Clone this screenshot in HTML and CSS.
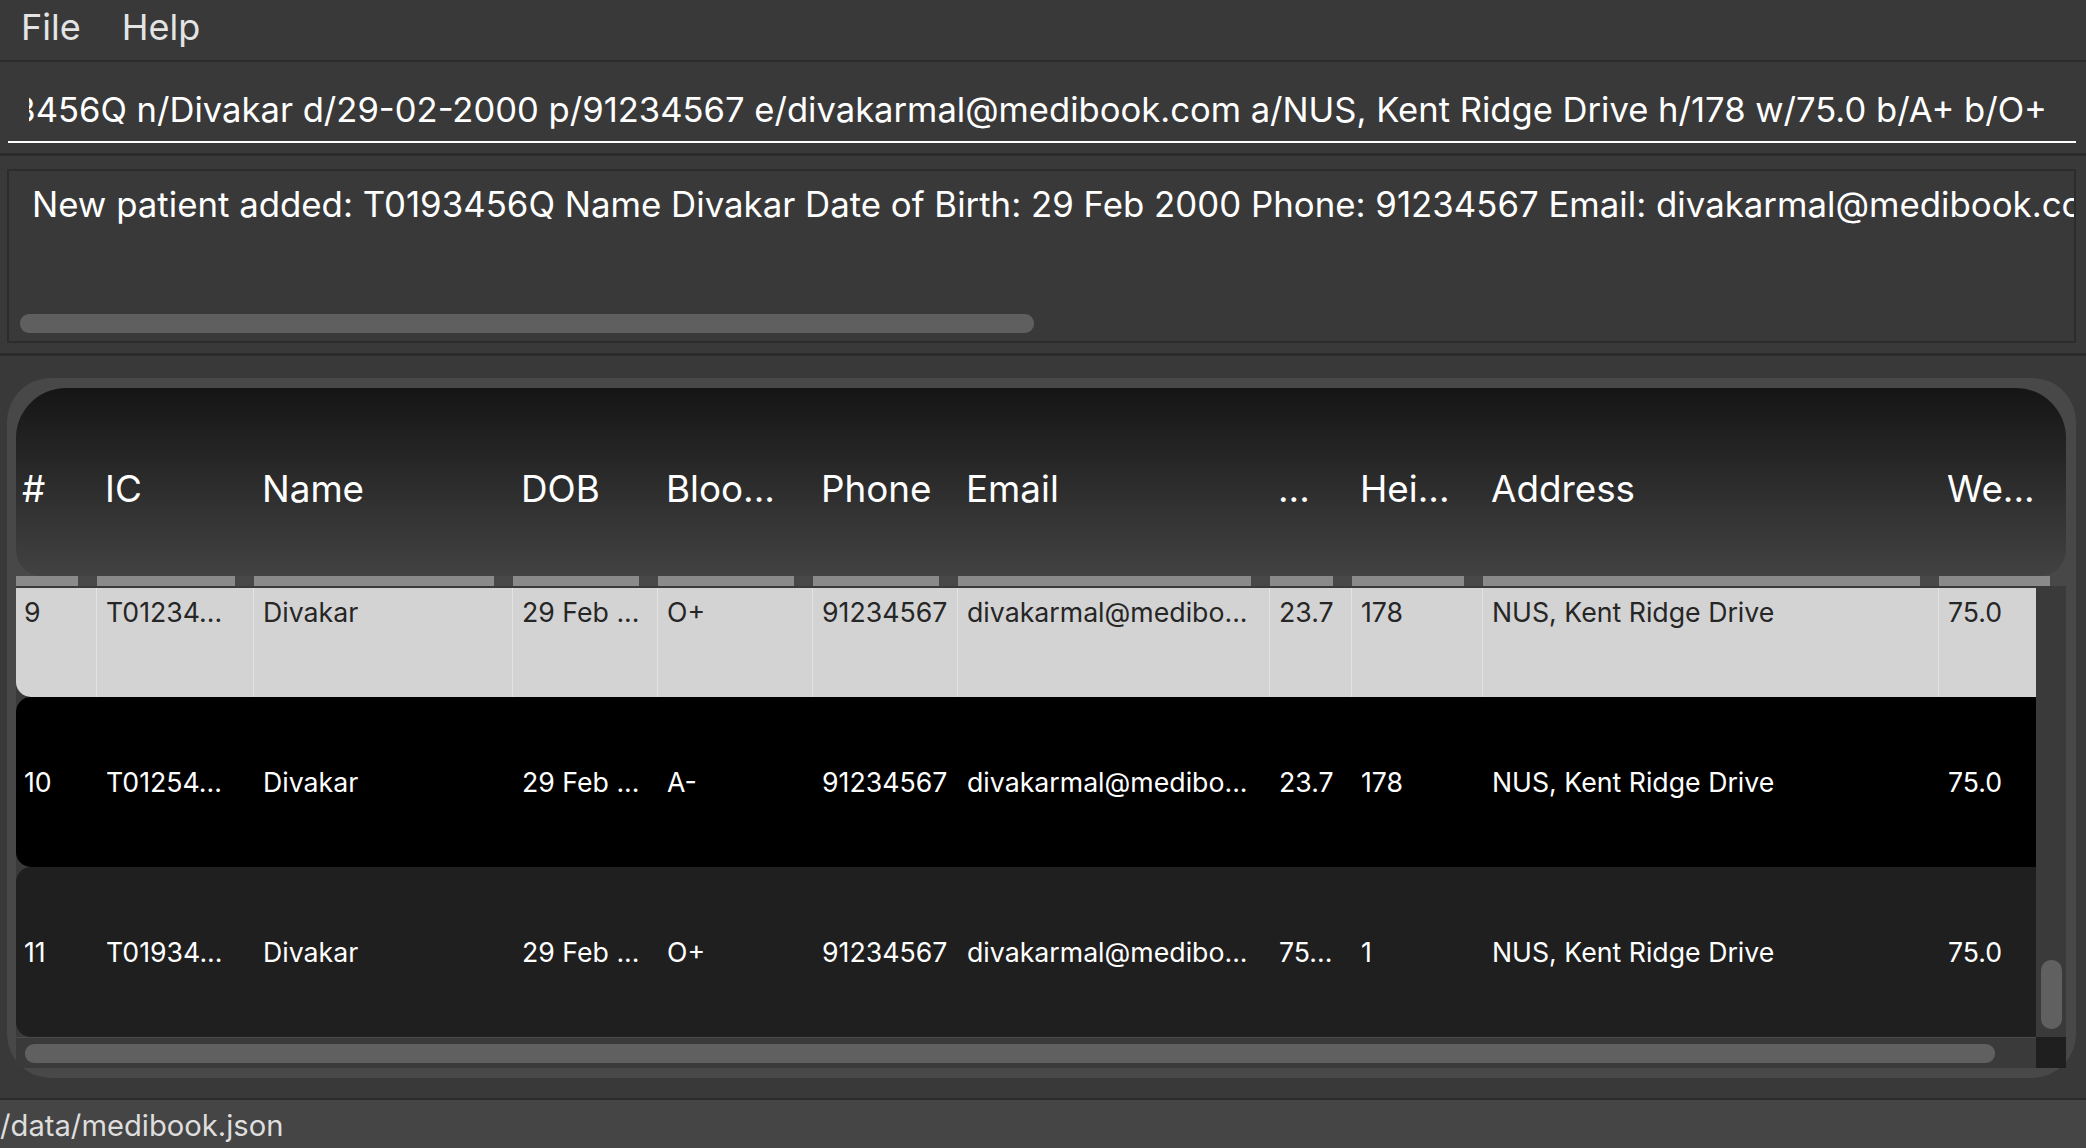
FILE: index.html
```html
<!DOCTYPE html>
<html>
<head>
<meta charset="utf-8">
<title>MediBook</title>
<link rel="stylesheet" href="styles.css">
</head>
<body>
<div class="app">
  <div class="menubar">
    <span class="menu-item">File</span>
    <span class="menu-item">Help</span>
  </div>

  <div class="command-area">
    <div class="command-field">
      <div class="command-clip">
        <span class="command-text">add i/T0193456Q n/Divakar d/29-02-2000 p/91234567 e/divakarmal@medibook.com a/NUS, Kent Ridge Drive h/178 w/75.0 b/A+ b/O+</span>
      </div>
    </div>
  </div>

  <div class="result-area">
    <div class="result-box">
      <div class="result-text">New patient added: T0193456Q Name Divakar Date of Birth: 29 Feb 2000 Phone: 91234567 Email: divakarmal@medibook.com Address: NUS, Kent Ridge Drive Height: 178 Weight: 75.0 Blood Type: A+ O+</div>
      <div class="result-scroll"><div class="result-thumb"></div></div>
    </div>
  </div>

  <div class="table-section">
    <div class="table-panel">
      <div class="thead cols">
        <div class="th th-first">#</div>
        <div class="th">IC</div>
        <div class="th">Name</div>
        <div class="th">DOB</div>
        <div class="th">Bloo...</div>
        <div class="th">Phone</div>
        <div class="th">Email</div>
        <div class="th">...</div>
        <div class="th">Hei...</div>
        <div class="th">Address</div>
        <div class="th">We...</div>
      </div>
      <div class="tbars cols">
        <div class="tbar"></div><div class="tbar"></div><div class="tbar"></div><div class="tbar"></div>
        <div class="tbar"></div><div class="tbar"></div><div class="tbar"></div><div class="tbar"></div>
        <div class="tbar"></div><div class="tbar"></div><div class="tbar"></div>
      </div>
      <div class="tbody">
        <div class="viewport">
          <div class="rows">
            <div class="row row-light cols">
              <div class="cell cell-first">9</div>
              <div class="cell">T01234...</div>
              <div class="cell">Divakar</div>
              <div class="cell">29 Feb ...</div>
              <div class="cell">O+</div>
              <div class="cell">91234567</div>
              <div class="cell">divakarmal@medibo...</div>
              <div class="cell">23.7</div>
              <div class="cell">178</div>
              <div class="cell">NUS, Kent Ridge Drive</div>
              <div class="cell">75.0</div>
            </div>
            <div class="row row-black cols">
              <div class="cell cell-first">10</div>
              <div class="cell">T01254...</div>
              <div class="cell">Divakar</div>
              <div class="cell">29 Feb ...</div>
              <div class="cell">A-</div>
              <div class="cell">91234567</div>
              <div class="cell">divakarmal@medibo...</div>
              <div class="cell">23.7</div>
              <div class="cell">178</div>
              <div class="cell">NUS, Kent Ridge Drive</div>
              <div class="cell">75.0</div>
            </div>
            <div class="row row-dark cols">
              <div class="cell cell-first">11</div>
              <div class="cell">T01934...</div>
              <div class="cell">Divakar</div>
              <div class="cell">29 Feb ...</div>
              <div class="cell">O+</div>
              <div class="cell">91234567</div>
              <div class="cell">divakarmal@medibo...</div>
              <div class="cell">75...</div>
              <div class="cell">1</div>
              <div class="cell">NUS, Kent Ridge Drive</div>
              <div class="cell">75.0</div>
            </div>
          </div>
        </div>
        <div class="vscroll"><div class="vthumb"></div></div>
        <div class="hscroll"><div class="hthumb"></div></div>
        <div class="corner"></div>
      </div>
    </div>
  </div>

  <div class="statusbar">/data/medibook.json</div>
</div>
</body>
</html>
```

FILE: styles.css
```css
html, body {
  margin: 0;
  padding: 0;
}

body {
  width: 2086px;
  height: 1148px;
  overflow: hidden;
  background: #393939;
  color: #ffffff;
  font-family: Inter, "Liberation Sans", Arial, sans-serif;
}

/* ---------- menu bar ---------- */
.menubar {
  display: flex;
  height: 54px;
  padding-bottom: 6px;
  border-bottom: 2px solid #2b2b2b;
}

.menu-item {
  padding: 0 20px 0 21px;
  font-size: 36px;
  line-height: 54px;
  color: #e4e4e4;
}

/* ---------- command box ---------- */
.command-area {
  padding: 18px 10px 10px 8px;
  border-bottom: 3px solid #2b2b2b;
}

.command-field {
  padding: 7px 29px 10px 21px;
  border-bottom: 2px solid #ffffff;
}

.command-clip {
  display: flex;
  justify-content: flex-end;
  height: 44px;
  overflow: hidden;
}

.command-text {
  flex-shrink: 0;
  white-space: nowrap;
  font-size: 34.6px;
  line-height: 44px;
}

/* ---------- result display ---------- */
.result-area {
  padding: 13px 10px 10px 7px;
  border-bottom: 3px solid #2b2b2b;
}

.result-box {
  display: flex;
  flex-direction: column;
  height: 174px;
  box-sizing: border-box;
  padding: 11px 0 8px 0;
  border: 2px solid #2c2c2c;
  overflow: hidden;
}

.result-text {
  padding-left: 23px;
  font-size: 34.8px;
  line-height: 44px;
  white-space: nowrap;
}

.result-scroll {
  margin-top: auto;
  padding-left: 11px;
}

.result-thumb {
  width: 1014px;
  height: 19px;
  border-radius: 9px;
  background: #5f5f5f;
}

/* ---------- table ---------- */
.table-section {
  padding: 22px 10px 20px 7px;
  border-bottom: 2px solid #2b2b2b;
}

.table-panel {
  display: flex;
  flex-direction: column;
  height: 700px;
  box-sizing: border-box;
  padding: 10px 10px 10px 9px;
  background: #484848;
  border-radius: 44px;
}

.cols {
  display: grid;
  grid-template-columns: 81px 157px 259px 145px 155px 145px 312px 82px 131px 456px 130px;
}

.thead {
  flex-shrink: 0;
  height: 188px;
  border-radius: 50px 50px 26px 26px;
  background: linear-gradient(to bottom, #151515, #424242);
  overflow: hidden;
}

.th {
  padding: 79px 0 0 8px;
  font-size: 36.8px;
  line-height: 44px;
  white-space: nowrap;
}

.th-first {
  padding-left: 6px;
}

.tbars {
  flex-shrink: 0;
  height: 10px;
  border-bottom: 2px solid #3a3a3a;
}

.tbar {
  margin-right: 19px;
  background: #8a8a8a;
}

.tbody {
  display: grid;
  grid-template-columns: 2020px 30px;
  grid-template-rows: 449px 31px;
}

.viewport {
  overflow: hidden;
  background: #3a3a3a;
}

.rows {
  width: 2053px;
  margin-top: -61px;
}

.row {
  height: 170px;
  border-radius: 15px;
  font-size: 26.7px;
}

.cell {
  display: flex;
  align-items: center;
  box-sizing: border-box;
  padding-left: 9px;
  padding-bottom: 1px;
  white-space: nowrap;
  overflow: hidden;
}

.cell-first {
  padding-left: 8px;
}

.row-light {
  background: #d3d3d3;
  color: #262626;
}

.row-light .cell {
  border-right: 1px solid #e3e3e3;
}

.row-light .cell:last-child {
  border-right: none;
}

.row-black {
  background: #000000;
}

.row-dark {
  background: #1f1f1f;
}

.vscroll {
  box-sizing: border-box;
  padding: 372px 4px 0 5px;
  background: #3a3a3a;
}

.vthumb {
  height: 69px;
  border-radius: 10px;
  background: #606060;
}

.hscroll {
  box-sizing: border-box;
  padding: 6px 0 0 8.5px;
  border-top: 1px solid #4a4a4a;
  background: #3a3a3a;
}

.hthumb {
  width: 1970px;
  height: 19px;
  border-radius: 9px;
  background: #606060;
}

.corner {
  background: #1f1f1f;
}

/* ---------- status bar ---------- */
.statusbar {
  height: 44px;
  padding-top: 4px;
  background: #454545;
  color: #dedede;
  font-size: 29.2px;
  line-height: 44px;
  white-space: nowrap;
  overflow: hidden;
}
```
